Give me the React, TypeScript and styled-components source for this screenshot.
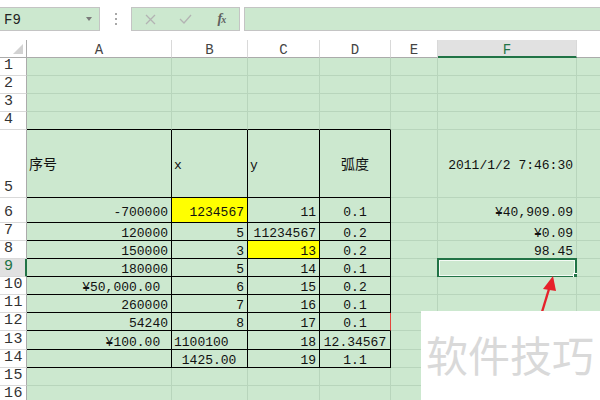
import React from 'react';
import styled, { createGlobalStyle } from 'styled-components';

const GREEN = '#cce8cf';
const GRID = '#b8d5bc';
const SEL = '#217346';
const HEAD_EDGE = '#ababab';
const HEAD_LINE = '#d9d9d9';

const COL_W = [145, 76, 72, 71, 47, 139, 40];
const ROW_H = [18, 18, 18, 18, 68, 25, 18, 18, 18, 18, 18, 18, 19, 18, 18, 18];
const LETTERS = ['A', 'B', 'C', 'D', 'E', 'F', ''];

type Align = 'l' | 'r' | 'c';
type Spec = { t?: string; a?: Align; y?: boolean; cjk?: boolean };

const e: Spec = {};
const R = (t: string): Spec => ({ t, a: 'r' });
const Cc = (t: string): Spec => ({ t, a: 'c' });
const L = (t: string): Spec => ({ t, a: 'l' });

const DATA: Spec[][] = [
  [e, e, e, e, e, e, e],
  [e, e, e, e, e, e, e],
  [e, e, e, e, e, e, e],
  [e, e, e, e, e, e, e],
  [
    { t: '序号', a: 'l', cjk: true },
    L('x'),
    L('y'),
    { t: '弧度', a: 'c', cjk: true },
    e,
    R('2011/1/2 7:46:30'),
    e,
  ],
  [R('-700000'), { t: '1234567', a: 'r', y: true }, R('11'), Cc('0.1'), e, R('¥40,909.09'), e],
  [R('120000'), R('5'), R('11234567'), Cc('0.2'), e, R('¥0.09'), e],
  [R('150000'), R('3'), { t: '13', a: 'r', y: true }, Cc('0.2'), e, R('98.45'), e],
  [R('180000'), R('5'), R('14'), Cc('0.1'), e, e, e],
  [R('¥50,000.00 '), R('6'), R('15'), Cc('0.2'), e, e, e],
  [R('260000'), R('7'), R('16'), Cc('0.1'), e, e, e],
  [R('54240'), R('8'), R('17'), Cc('0.1'), e, e, e],
  [R('¥100.00 '), L('1100100'), R('18'), Cc('12.34567'), e, e, e],
  [e, L(' 1425.00'), R('19'), Cc('1.1'), e, e, e],
  [e, e, e, e, e, e, e],
  [e, e, e, e, e, e, e],
];

const GlobalStyle = createGlobalStyle`
  html, body { margin: 0; padding: 0; background: #fff; }
  body {
    width: 600px; height: 400px; overflow: hidden;
    font-family: "Liberation Mono", "Noto Sans CJK SC", monospace;
  }
`;

const Page = styled.div`
  position: relative;
  width: 600px;
  height: 400px;
  overflow: hidden;
  background: #fff;
`;

const TopBar = styled.div`
  height: 40px;
  box-sizing: border-box;
  padding-top: 7px;
  display: flex;
  align-items: flex-start;
`;

const NameBox = styled.div`
  width: 100px;
  height: 24px;
  box-sizing: border-box;
  background: ${GREEN};
  border: 1px solid #c4c4c4;
  border-left: none;
  display: flex;
  align-items: center;
  justify-content: space-between;
  padding: 1px 7px 0 4px;
  font-size: 14px;
  color: #222;
`;

const DropArrow = styled.span`
  width: 0;
  height: 0;
  border-left: 3px solid transparent;
  border-right: 3px solid transparent;
  border-top: 4px solid #7a7a7a;
  margin-top: -2px;
`;

const Grip = styled.div`
  width: 31px;
  height: 24px;
  display: flex;
  flex-direction: column;
  align-items: center;
  justify-content: center;
  gap: 3px;
`;

const Dot = styled.span`
  width: 2px;
  height: 2px;
  background: #a8a8a8;
`;

const ToolBox = styled.div`
  width: 109px;
  height: 24px;
  box-sizing: border-box;
  background: ${GREEN};
  border: 1px solid #c4c4c4;
  display: flex;
  align-items: center;
  padding-left: 1px;
`;

const ToolSlot = styled.div`
  width: 36px;
  height: 22px;
  display: flex;
  align-items: center;
  justify-content: center;
`;

const Fx = styled.span`
  font-family: "Liberation Serif", serif;
  font-style: italic;
  font-weight: bold;
  font-size: 14px;
  color: #606060;
  letter-spacing: -1px;
  & > small {
    font-size: 10px;
  }
`;

const FormulaBox = styled.div`
  flex: 1;
  margin-left: 4px;
  height: 24px;
  box-sizing: border-box;
  background: ${GREEN};
  border: 1px solid #c4c4c4;
  border-right: none;
`;

const Sheet = styled.div`
  display: grid;
  grid-template-columns: 27px ${COL_W.map((w) => `${w}px`).join(' ')};
  grid-template-rows: 18px ${ROW_H.map((h) => `${h}px`).join(' ')};
  font-size: 13px;
`;

const Corner = styled.div`
  box-sizing: border-box;
  background: #fff;
  border-right: 1px solid ${HEAD_EDGE};
  border-bottom: 1px solid ${HEAD_EDGE};
  display: flex;
  align-items: flex-end;
  justify-content: flex-end;
  padding: 0 3px 3px 0;
`;

const CornerMark = styled.span`
  width: 0;
  height: 0;
  border-left: 10px solid transparent;
  border-bottom: 10px solid #d2d2d2;
`;

const ColHead = styled.div<{ $active?: boolean }>`
  box-sizing: border-box;
  background: ${(p) => (p.$active ? '#e1e1e1' : '#fff')};
  color: ${(p) => (p.$active ? SEL : '#444')};
  border-right: 1px solid ${HEAD_LINE};
  border-bottom: ${(p) => (p.$active ? `2px solid ${SEL}` : `1px solid ${HEAD_EDGE}`)};
  display: flex;
  align-items: center;
  justify-content: center;
  padding-top: 3px;
  font-size: 14px;
`;

const RowHead = styled.div<{ $active?: boolean }>`
  box-sizing: border-box;
  background: ${(p) => (p.$active ? '#e1e1e1' : '#fff')};
  color: ${(p) => (p.$active ? SEL : '#333')};
  border-right: ${(p) => (p.$active ? `2px solid ${SEL}` : `1px solid ${HEAD_EDGE}`)};
  border-bottom: 1px solid ${HEAD_LINE};
  display: flex;
  align-items: flex-end;
  padding: 0 0 1px 4px;
  font-size: 15px;
  line-height: 16px;
  letter-spacing: 0.5px;
`;

const Cell = styled.div<{ $align: Align; $fill: string; $right: string; $bottom: string; $cjk?: boolean }>`
  position: relative;
  box-sizing: border-box;
  background: ${(p) => p.$fill};
  border-right: 1px solid ${(p) => p.$right};
  border-bottom: 1px solid ${(p) => p.$bottom};
  display: flex;
  align-items: center;
  justify-content: ${(p) => (p.$align === 'r' ? 'flex-end' : p.$align === 'c' ? 'center' : 'flex-start')};
  padding: 4px ${(p) => (p.$align === 'r' ? 3 : 1)}px 0 ${(p) => (p.$align === 'l' ? 2 : 1)}px;
  white-space: pre;
  line-height: 13px;
  font-size: ${(p) => (p.$cjk ? 14 : 13)}px;
  color: #111;
`;

const Selection = styled.div`
  position: absolute;
  left: -1px;
  top: -1px;
  width: 140px;
  height: 20px;
  box-sizing: border-box;
  border: 2px solid ${SEL};
  box-shadow: inset 0 0 0 1px #f4fbf5;
`;

const FillHandle = styled.span`
  position: absolute;
  right: -4px;
  bottom: -3px;
  width: 5px;
  height: 5px;
  background: ${SEL};
  outline: 1px solid #fff;
`;

const Watermark = styled.div`
  position: absolute;
  left: 421px;
  top: 311px;
  right: 0;
  bottom: 0;
  background: #fff;
  display: flex;
  align-items: center;
  padding: 0 0 4px 5px;
  font-family: "Noto Sans CJK SC", sans-serif;
  font-size: 42px;
  color: #d9d9d9;
  white-space: nowrap;
`;

const ArrowSvg = styled.svg`
  position: absolute;
  left: 538px;
  top: 272px;
`;

function borderColors(rowNum: number, c: number) {
  const inBox = rowNum >= 5 && rowNum <= 14 && c <= 3;
  let right = inBox ? '#000' : GRID;
  if (rowNum === 12 && c === 3) right = '#e2453c';
  const bottom = inBox || (rowNum === 4 && c <= 3) ? '#000' : GRID;
  return { right, bottom };
}

export default function App() {
  return (
    <Page>
      <GlobalStyle />
      <TopBar>
        <NameBox>
          <span>F9</span>
          <DropArrow />
        </NameBox>
        <Grip>
          <Dot />
          <Dot />
          <Dot />
        </Grip>
        <ToolBox>
          <ToolSlot>
            <svg width="11" height="11" viewBox="0 0 11 11">
              <path d="M1 1 L10 10 M10 1 L1 10" stroke="#b3b3b3" strokeWidth="1.3" fill="none" />
            </svg>
          </ToolSlot>
          <ToolSlot>
            <svg width="13" height="10" viewBox="0 0 13 10">
              <path d="M1 5 L5 9 L12 1" stroke="#b3b3b3" strokeWidth="1.3" fill="none" />
            </svg>
          </ToolSlot>
          <ToolSlot>
            <Fx>
              f<small>x</small>
            </Fx>
          </ToolSlot>
        </ToolBox>
        <FormulaBox />
      </TopBar>

      <Sheet>
        <Corner>
          <CornerMark />
        </Corner>
        {LETTERS.map((l, i) => (
          <ColHead key={`h${i}`} $active={l === 'F'}>
            {l}
          </ColHead>
        ))}
        {DATA.map((row, r) => {
          const rowNum = r + 1;
          return (
            <React.Fragment key={`r${r}`}>
              <RowHead $active={rowNum === 9}>{rowNum}</RowHead>
              {row.map((cell, c) => {
                const { right, bottom } = borderColors(rowNum, c);
                const selected = rowNum === 9 && c === 5;
                return (
                  <Cell
                    key={`c${r}-${c}`}
                    $align={cell.a ?? 'l'}
                    $fill={cell.y ? '#ffff00' : GREEN}
                    $right={right}
                    $bottom={bottom}
                    $cjk={cell.cjk}
                  >
                    {cell.t ?? ''}
                    {selected && (
                      <Selection>
                        <FillHandle />
                      </Selection>
                    )}
                  </Cell>
                );
              })}
            </React.Fragment>
          );
        })}
      </Sheet>

      <ArrowSvg width="24" height="42" viewBox="0 0 24 42">
        <path d="M11 17 L4 40" stroke="#e6212b" strokeWidth="2.4" fill="none" />
        <polygon points="15,4 5,17 18,19" fill="#e6212b" />
      </ArrowSvg>

      <Watermark>软件技巧</Watermark>
    </Page>
  );
}
